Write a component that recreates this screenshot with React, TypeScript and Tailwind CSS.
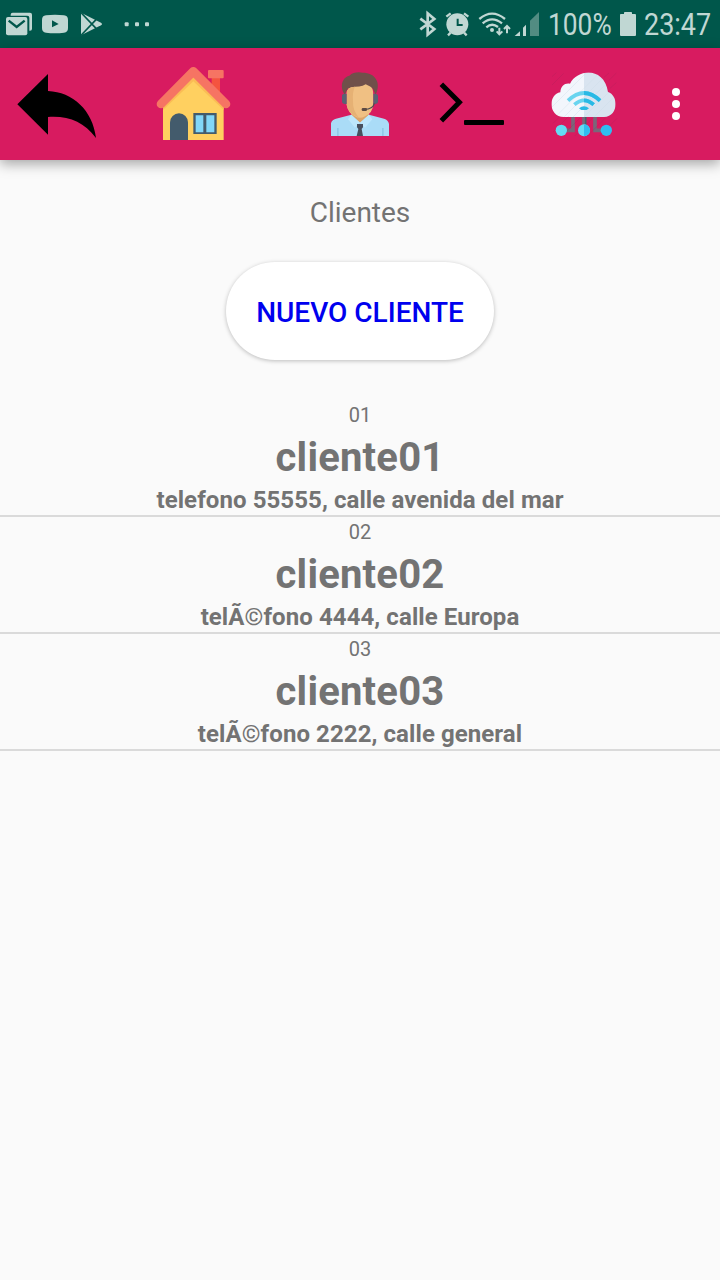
import React from "react";

const clients = [
  { id: "01", name: "cliente01", info: "telefono 55555, calle avenida del mar" },
  { id: "02", name: "cliente02", info: "telÃ©fono 4444, calle Europa" },
  { id: "03", name: "cliente03", info: "telÃ©fono 2222, calle general" },
];

function Notifications() {
  return (
    <svg className="h-12 w-40 shrink-0" viewBox="0 0 480 144" fill="#c0d7d3">
      <path d="M32 47V44Q32 38 38 38H90Q96 38 96 44V86Q96 92 90 92H88V53Q88 47 82 47Z" />
      <rect x="18" y="51" width="64" height="55" rx="6" />
      <path d="M26 62L50 81L74 62" fill="none" stroke="#00574b" strokeWidth="7" />
      <path d="M138 46Q165 42 192 46Q204 47 204 60V84Q204 97 192 98Q165 101 138 98Q126 97 126 84V60Q126 47 138 46Z" />
      <path d="M156 61L176 72L156 82Z" fill="#00574b" />
      <path d="M243 38L303 68Q309 72 303 76L243 106Z" />
      <path d="M244 39L291 88M244 105L291 56" fill="none" stroke="#00574b" strokeWidth="5" />
      <rect x="374" y="67" width="12" height="12" rx="3" />
      <rect x="405" y="67" width="12" height="12" rx="3" />
      <rect x="435" y="67" width="12" height="12" rx="3" />
    </svg>
  );
}

function SystemIcons() {
  return (
    <svg className="h-12 w-[136px] shrink-0" viewBox="0 0 408 144" fill="none" stroke="#c0d7d3">
      <path d="M31 56L73 87L53 104V40L73 57L31 88" strokeWidth="8" />
      <circle cx="142" cy="73" r="33" fill="#c0d7d3" stroke="none" />
      <path d="M109 50L122 40M175 50L162 40M122 98L114 106M162 98L170 106" strokeWidth="7" />
      <path d="M143 56V75H158" stroke="#00574b" strokeWidth="6" />
      <path d="M208 57Q246 25 285 57M218 70Q246 46 276 70M229 82Q246 67 264 81" strokeWidth="7" />
      <circle cx="246" cy="90" r="6" fill="#c0d7d3" stroke="none" />
      <path d="M268 83V103M260 94L268 103L277 94M291 100V78M282 87L291 78L300 87" strokeWidth="6" />
      <path d="M314 108L330 94V108Z M339 83L348 74V108H339Z" fill="#c0d7d3" stroke="none" />
      <path d="M360 62L387 36V108H360Z" fill="#528c82" stroke="none" />
    </svg>
  );
}

function BackIcon() {
  return (
    <svg className="h-28 w-[120px] shrink-0" viewBox="0 -24 360 336">
      <path d="M52 145L144 54V105C218 108 278 162 288 246C250 197 207 179 144 183V236Z" />
    </svg>
  );
}

function HomeIcon() {
  return (
    <svg className="ml-[25px] h-28 w-[100px] shrink-0" viewBox="0 -24 300 336">
      <path d="M200 64H225V116L200 92Z" fill="#f4543f" />
      <rect x="189" y="42" width="47" height="25" rx="3" fill="#f67463" />
      <path d="M54 145L145 60L236 145V252H54Z" fill="#ffd060" />
      <path d="M54 149L145 62L236 149V162L145 76L54 162Z" fill="#fbbc55" />
      <path d="M48 144L145 46L243 144" fill="none" stroke="#f67463" strokeWidth="26" strokeLinecap="round" strokeLinejoin="round" />
      <path d="M75 252V199A27 27 0 0 1 129 199V252Z" fill="#435b6c" />
      <rect x="145" y="171" width="70" height="63" fill="#435b6c" />
      <path d="M152 178H175V229H152ZM184 178H208V229H184Z" fill="#82d7f8" />
    </svg>
  );
}

function AgentIcon() {
  return (
    <svg className="ml-[75px] h-28 w-20 shrink-0" viewBox="0 -36 240 336">
      <path d="M94 150H147V172L120 204L94 172Z" fill="#dca56a" />
      <path d="M33 228V190Q35 179 48 176L94 164L120 188L147 164L192 176Q205 180 207 192V228Z" fill="#aadcf7" />
      <path d="M94 164L84 178L105 203L120 188ZM147 164L157 178L135 203L120 188Z" fill="#bde7fc" />
      <path d="M51 204V228H56V204ZM186 204V228H191V204Z" fill="#91c9e8" />
      <path d="M111 192H129V202L125 207L129 228H110L115 207L111 202Z" fill="#48505e" />
      <path d="M74 104C57 76 69 51 88 47Q103 34 128 38C165 38 185 67 167 104L158 85H84Z" fill="#70504a" />
      <path d="M80 101Q80 80 105 80Q118 80 128 77L137 73L149 79Q160 83 160 104V134Q158 158 135 169Q120 178 105 169Q83 158 80 134Z" fill="#f0c083" />
      <path d="M80 101Q80 80 105 80Q97 93 99 124Q98 153 117 173Q83 160 80 134Z" fill="#e6b174" />
      <path d="M66 108Q66 101 75 101H80V132H75Q66 132 66 124ZM160 101H165Q174 101 174 109V124Q174 132 165 132H160Z" fill="#596273" />
      <path d="M163 130Q159 148 133 148" fill="none" stroke="#4e4c51" strokeWidth="4" />
      <rect x="125" y="144" width="16" height="9" rx="4" fill="#5c4a43" />
    </svg>
  );
}

function TerminalIcon() {
  return (
    <svg className="ml-[25px] h-28 w-[100px] shrink-0" viewBox="0 -36 300 336" fill="none" stroke="#000">
      <path d="M49 73L103 127L49 182" strokeWidth="15" />
      <rect x="117" y="180" width="120" height="15" rx="3" fill="#000" stroke="none" />
    </svg>
  );
}

function CloudIcon() {
  return (
    <svg className="ml-[15px] h-28 w-20 shrink-0" viewBox="0 -36 240 336">
      <defs>
        <clipPath id="cloud-shape">
          <path d="M72 171C25 171 23 104 61 97C62 76 76 68 90 71C115 24 193 22 204 96C238 107 234 171 192 171Z" />
        </clipPath>
        <clipPath id="right-half"><rect x="132" y="20" width="108" height="230" /></clipPath>
      </defs>
      <path d="M99 168V211H78M132 168V202M165 168V211H188" fill="none" stroke="#79677a" strokeWidth="11" />
      <path d="M137 168V202" stroke="#42676d" strokeWidth="5" />
      <g clipPath="url(#cloud-shape)">
        <path d="M20 20H132V180H20Z" fill="#f2f6fc" />
        <path d="M132 20H240V180H132Z" fill="#d9e4f0" />
        <path d="M24 153L137 40M46 171L180 37M72 171L204 39M99 171L217 53M132 171L234 69M162 171L234 99" fill="none" stroke="#cbdcea" strokeWidth="2" opacity=".55" />
      </g>
      <g fill="none" stroke="#69d4ef" strokeWidth="11">
        <path d="M84 122Q132 76 180 122M103 134Q132 108 161 134" />
      </g>
      <g fill="none" stroke="#29b9e5" strokeWidth="11" clipPath="url(#right-half)">
        <path d="M84 122Q132 76 180 122M103 134Q132 108 161 134" />
      </g>
      <path d="M117 145Q132 132 147 145L140 150H124Z" fill="#29b9e5" />
      <g fill="none" stroke="#9d2355" strokeWidth="2" opacity=".35">
        <path d="M36 50L49 38M36 75L71 40M192 52L207 39M206 62L229 39M210 85L229 68M39 190L57 172M39 216L85 170M66 228L121 173M104 228L158 174M142 228L196 174M178 228L231 175" />
      </g>
      <circle cx="64" cy="211" r="17" fill="#64dcf4" />
      <circle cx="132" cy="211" r="18" fill="#64dcf4" />
      <circle cx="132" cy="211" r="18" fill="#30bdf0" clipPath="url(#right-half)" />
      <circle cx="199" cy="211" r="17" fill="#30bdf0" />
    </svg>
  );
}

export default function App() {
  return (
    <div className="flex h-[1280px] w-[720px] flex-col overflow-hidden bg-[#fafafa] font-['Roboto',sans-serif] text-[#737373]">
      <div className="flex h-12 shrink-0 items-center bg-[#00574b] text-[#c0d7d3]">
        <Notifications />
        <div className="ml-[250px] flex">
          <SystemIcons />
        </div>
        <span className="ml-0.5 w-16 origin-left scale-x-[0.85] whitespace-nowrap pt-0.5 text-[31px] leading-[48px]">100%</span>
        <svg className="ml-2 h-12 w-4 shrink-0" viewBox="0 0 16 48" fill="#c0d7d3">
          <path d="M0 14.5Q0 14 1 14H4V12.5Q4 12 5 12H11Q12 12 12 12.5V14H15Q16 14 16 15V35Q16 36 15 36H1Q0 36 0 35Z" />
        </svg>
        <span className="ml-2 w-[76px] shrink-0 origin-left scale-x-[0.87] whitespace-nowrap pt-0.5 text-[31px] leading-[48px]">23:47</span>
      </div>
      <header className="relative flex h-28 shrink-0 bg-[#d81b60] shadow-[0_4px_12px_rgba(0,0,0,0.34)]">
        <BackIcon />
        <HomeIcon />
        <AgentIcon />
        <TerminalIcon />
        <CloudIcon />
        <svg className="ml-[46px] h-28 w-5" viewBox="0 0 20 112" fill="#fff">
          <circle cx="10" cy="44" r="4" />
          <circle cx="10" cy="56" r="4" />
          <circle cx="10" cy="68" r="4" />
        </svg>
      </header>
      <main className="flex flex-col items-center pt-[33px]">
        <h1 className="h-10 text-[28px] leading-10">Clientes</h1>
        <button className="mt-[29px] h-[98px] w-[268px] rounded-[49px] bg-white pt-1 text-[28px] font-medium leading-[94px] text-[#0000ee] shadow-[0_1px_4px_rgba(0,0,0,0.25)]">
          NUEVO CLIENTE
        </button>
        <ul className="mt-10 w-full text-center">
          {clients.map((client) => (
            <li key={client.id} className="h-[117px] border-b-2 border-[#dadada] pt-px">
              <p className="h-7 text-xl leading-7">{client.id}</p>
              <p className="h-14 pt-px text-[40px] font-bold leading-[56px] tracking-[0.2px]">{client.name}</p>
              <p className="h-[30px] text-2xl font-bold leading-[31px] tracking-[0.08px]">{client.info}</p>
            </li>
          ))}
        </ul>
      </main>
    </div>
  );
}
